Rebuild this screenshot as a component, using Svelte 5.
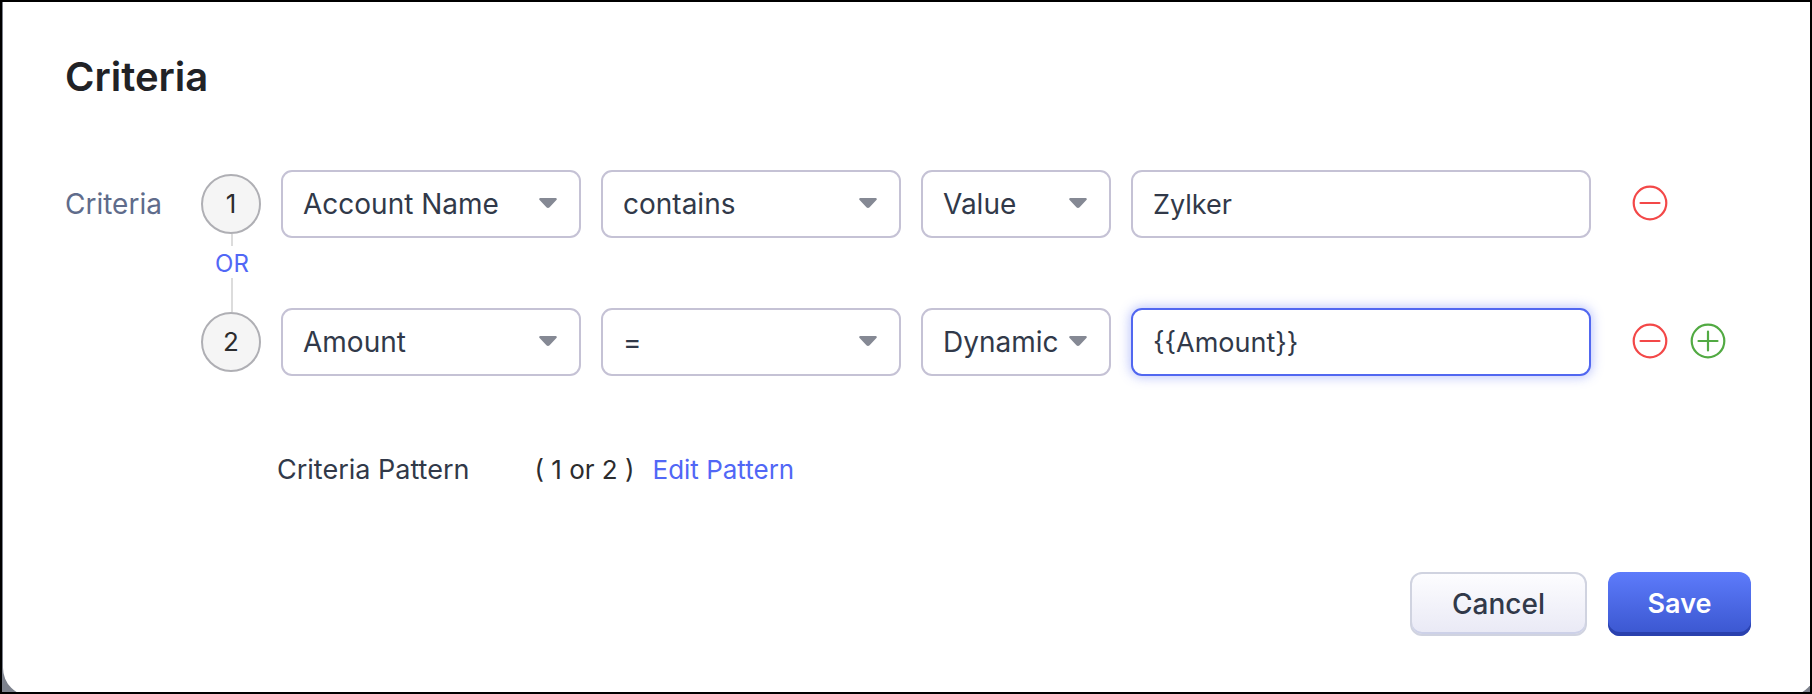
<script>
  let rows = $state([
    { field: 'Account Name', operator: 'contains', kind: 'Value', value: 'Zylker' },
    { field: 'Amount', operator: '=', kind: 'Dynamic', value: '{{Amount}}' }
  ]);
  const fields = ['Account Name', 'Amount'];
  const operators = ['contains', '='];
  const kinds = ['Value', 'Dynamic'];
</script>

{#snippet picker(options, row, key, label)}
  <div class="picker">
    <select aria-label={label} bind:value={row[key]}>
      {#each options as option}
        <option value={option}>{option}</option>
      {/each}
    </select>
    <svg class="caret" viewBox="0 0 18 10" aria-hidden="true">
      <path d="M1.600 0h14.800c1.300 0 1.800 1.200 1 2L10.600 9.200c-.9 1-2.300 1-3.200 0L.6 2C-.2 1.200.3 0 1.600 0z" />
    </svg>
  </div>
{/snippet}

<div class="frame">
  <main class="dialog">
    <h1>Criteria</h1>

    <section class="builder">
      <span class="label">Criteria</span>
      <div class="rows">
        {#each rows as row, i}
          {#if i > 0}
            <div class="joiner">
              <span class="line"></span>
              <button class="logic" type="button">OR</button>
              <span class="line"></span>
            </div>
          {/if}
          <div class="row">
            <span class="number">{i + 1}</span>
            {@render picker(fields, row, 'field', 'Field')}
            {@render picker(operators, row, 'operator', 'Operator')}
            {@render picker(kinds, row, 'kind', 'Value type')}
            <input class:active={i === rows.length - 1} type="text" aria-label="Value" bind:value={row.value} />
            <div class="actions">
              <button class="icon remove" type="button" aria-label="Remove">
                <svg viewBox="0 0 36 36"><circle cx="18" cy="18" r="16.300" /><path d="M8.500 18h19" /></svg>
              </button>
              {#if i === rows.length - 1}
                <button class="icon add" type="button" aria-label="Add">
                  <svg viewBox="0 0 36 36"><circle cx="18" cy="18" r="16.300" /><path d="M8.500 18h19M18 8.500v19" /></svg>
                </button>
              {/if}
            </div>
          </div>
        {/each}
      </div>
    </section>

    <section class="pattern">
      <span class="name">Criteria Pattern</span>
      <span class="expression">( 1 or 2 )</span>
      <a href="#edit">Edit Pattern</a>
    </section>

    <footer>
      <button class="cancel" type="button">Cancel</button>
      <button class="save" type="button">Save</button>
    </footer>
  </main>
</div>

<style>
  * {
    box-sizing: border-box;
  }

  .frame {
    display: flex;
    min-height: 100vh;
    border: 2px solid #000;
    background: #7d828d;
    overflow: hidden;
    font-family: Inter, "Liberation Sans", sans-serif;
    font-size: 28px;
    line-height: 32px;
    color: #313949;
  }

  .dialog {
    flex: 1;
    margin: 0 -6px -4px 1px;
    padding: 51px 65px 60px 62px;
    border-radius: 0 0 28px 28px;
    background: #fff;
    display: flex;
    flex-direction: column;
  }

  h1 {
    margin: 0;
    font-size: 40px;
    line-height: 48px;
    font-weight: 600;
    color: #212226;
  }

  .builder {
    display: flex;
    gap: 20px;
    margin-top: 69px;
  }

  .label {
    width: 116px;
    line-height: 68px;
    color: #5f6c8b;
    flex: none;
  }

  .rows {
    flex: 1;
    min-width: 0;
  }

  .row {
    display: grid;
    grid-template-columns: 60px 300fr 300fr 190fr 460fr 140px;
    column-gap: 20px;
    align-items: center;
  }

  .number {
    height: 60px;
    border: 2px solid #afafb4;
    border-radius: 50%;
    background: #f5f5f5;
    color: #2c2c2e;
    font-size: 26px;
    line-height: 56px;
    text-align: center;
  }

  .joiner {
    display: grid;
    grid-template-rows: 12px 32px 34px;
    justify-items: center;
    width: 62px;
    height: 70px;
    margin: -4px 0 4px;
  }

  .line {
    width: 2px;
    background: #dcdcdc;
  }

  button {
    font: inherit;
    padding: 0;
    border: 0;
    background: none;
    cursor: pointer;
  }

  .logic {
    padding-top: 4px;
    font-size: 24px;
    line-height: 28px;
    color: #5167f6;
  }

  .picker {
    display: grid;
    align-items: center;
  }

  .picker > * {
    grid-area: 1 / 1;
  }

  select,
  input {
    width: 100%;
    min-width: 0;
    height: 68px;
    margin: 0;
    padding: 0 20px;
    border: 2px solid #c5c2d5;
    border-radius: 11px;
    outline: 0;
    background: #fff;
    color: #313949;
    font: inherit;
    appearance: none;
  }

  input {
    font-size: 27px;
  }

  .caret {
    justify-self: end;
    width: 18px;
    height: 10px;
    margin: 0 24px 2px 0;
    fill: #858994;
    pointer-events: none;
  }

  input.active {
    border-color: #5167f0;
    box-shadow: 0 0 12px 1px rgba(81, 103, 246, 0.4);
  }

  .actions {
    display: flex;
    gap: 22px;
    padding: 0 0 2px 21px;
  }

  .icon {
    width: 36px;
    height: 36px;
  }

  .icon svg {
    display: block;
    fill: none;
    stroke-width: 2.200;
    stroke-linecap: round;
  }

  .remove {
    stroke: #f34848;
  }

  .add {
    stroke: #52aa43;
  }

  .pattern {
    display: flex;
    align-items: baseline;
    margin-top: 78px;
    padding-left: 212px;
    font-size: 27px;
  }

  .expression {
    margin-left: 65px;
    font-size: 26px;
    color: #2c2c2e;
  }

  a {
    margin-left: 18px;
    font-size: 26px;
    color: #5167f6;
    text-decoration: none;
  }

  footer {
    display: flex;
    justify-content: flex-end;
    gap: 21px;
    margin-top: auto;
  }

  footer button {
    height: 64px;
    border-radius: 12px;
  }

  .cancel {
    width: 177px;
    border: 2px solid #d0d3e0;
    background: linear-gradient(#fdfdff, #e9e9f5);
    box-shadow: inset 0 -2px #cdd1e8;
    color: #313949;
    font-weight: 500;
  }

  .save {
    width: 143px;
    background: linear-gradient(#5d7bfb, #3a56cf);
    box-shadow: inset 0 -4px #2a41ae;
    color: #fff;
    font-size: 27px;
    font-weight: 600;
  }
</style>
